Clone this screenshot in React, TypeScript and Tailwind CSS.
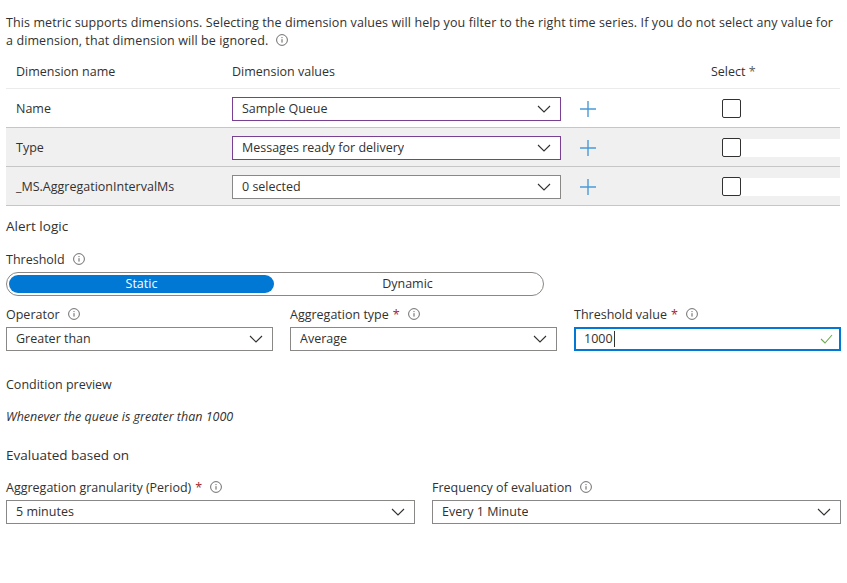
import React from 'react';

function Info() {
  return (
    <svg className="ml-[8px] inline-block h-[12px] w-[12px] align-[-1px]" viewBox="0 0 12 12" fill="none">
      <circle cx="6" cy="6" r="5.4" stroke="#605e5c" strokeWidth="0.9" />
      <line x1="6" y1="5.2" x2="6" y2="8.6" stroke="#605e5c" strokeWidth="1" />
      <circle cx="6" cy="3.6" r="0.6" fill="#605e5c" />
    </svg>
  );
}

function Chevron() {
  return (
    <svg className="h-[8px] w-[14px]" viewBox="0 0 14 8" fill="none">
      <path d="M1 1l6 6 6-6" stroke="#323130" strokeWidth="1.1" />
    </svg>
  );
}

function Plus() {
  return (
    <svg className="h-[18px] w-[18px]" viewBox="0 0 18 18" fill="none">
      <path d="M9 1v16M1 9h16" stroke="#4a9ad8" strokeWidth="1.4" />
    </svg>
  );
}

function Dropdown({ value, className = '', border = 'border-[#8a8886]' }: { value: string; className?: string; border?: string }) {
  return (
    <div className={`flex h-[24px] items-center justify-between border bg-white pl-[9px] pr-[9px] ${border} ${className}`}>
      <span className="truncate">{value}</span>
      <Chevron />
    </div>
  );
}

function Req() {
  return <span className="ml-[4px] text-[#a4262c]">*</span>;
}

const rows = [
  { name: 'Name', value: 'Sample Queue', purple: true, shaded: false },
  { name: 'Type', value: 'Messages ready for delivery', purple: true, shaded: true },
  { name: '_MS.AggregationIntervalMs', value: '0 selected', purple: false, shaded: true },
];

export default function App() {
  return (
    <div className="h-[583px] w-[847px] bg-white px-[6px] text-[12.5px] leading-[18px] text-[#323130] font-['Open_Sans',sans-serif]">
      {/* intro */}
      <p className="w-[832px] pt-[14px] tracking-[0.1px]">
        This metric supports dimensions. Selecting the dimension values will help you filter to the right time series. If you do not select any value for a dimension, that dimension will be ignored.
        <Info />
      </p>

      {/* dimensions table */}
      <div className="w-[834px]">
        <div className="flex h-[39px] items-center border-b border-[#edebe9] pt-[5px]">
          <div className="w-[216px] pl-[10px]">Dimension name</div>
          <div className="w-[489px] pl-[10px]">Dimension values</div>
          <div>
            Select <span className="text-[#605e5c]">*</span>
          </div>
        </div>
        {rows.map((r) => (
          <div
            key={r.name}
            className={`flex h-[39px] items-center border-b border-[#c8c6c4] pt-[1px] ${r.shaded ? 'bg-[#f0f0f0]' : 'bg-white'}`}
          >
            <div className="w-[216px] pl-[10px]">{r.name}</div>
            <div className="w-[339px] pl-[10px]">
              <Dropdown value={r.value} border={r.purple ? 'border-[#7a3e93]' : 'border-[#8a8886]'} />
            </div>
            <div className="ml-[18px]">
              <Plus />
            </div>
            <div className="ml-[125px] h-[19px] w-[19px] rounded-[2px] border border-[#323130] bg-white" />
            {r.shaded && <div className="h-[18px] flex-1 bg-white" />}
          </div>
        ))}
      </div>

      {/* alert logic */}
      <div className="mt-[11px] text-[13.5px]">Alert logic</div>

      <div className="mt-[16px]">
        Threshold
        <Info />
      </div>
      <div className="mt-[3px] flex h-[24px] w-[538px] items-center rounded-full border border-[#8a8886] p-[2px]">
        <div className="flex h-full w-[265px] items-center justify-center rounded-full bg-[#0078d4] text-white">Static</div>
        <div className="flex flex-1 items-center justify-center">Dynamic</div>
      </div>

      <div className="mt-[10px] flex gap-[17px]">
        <div className="w-[267px]">
          <div>
            Operator
            <Info />
          </div>
          <Dropdown value="Greater than" className="mt-[3px]" />
        </div>
        <div className="w-[267px]">
          <div>
            Aggregation type
            <Req />
            <Info />
          </div>
          <Dropdown value="Average" className="mt-[3px]" />
        </div>
        <div className="w-[267px]">
          <div>
            Threshold value
            <Req />
            <Info />
          </div>
          <div className="mt-[3px] flex h-[24px] items-center justify-between border-2 border-[#0078d4] pl-[8px] pr-[6px]">
            <span className="flex items-center">
              1000<span className="ml-[1px] h-[16px] w-px bg-[#323130]" />
            </span>
            <svg className="h-[10px] w-[13px]" viewBox="0 0 13 10" fill="none">
              <path d="M1 5l4 4 7-8" stroke="#6bab4d" strokeWidth="1.1" />
            </svg>
          </div>
        </div>
      </div>

      <div className="mt-[25px]">Condition preview</div>
      <div className="mt-[14px] italic">Whenever the queue is greater than 1000</div>

      <div className="mt-[20px] text-[13.5px]">Evaluated based on</div>

      <div className="mt-[15px] flex gap-[17px]">
        <div className="w-[409px]">
          <div>
            Aggregation granularity (Period)
            <Req />
            <Info />
          </div>
          <Dropdown value="5 minutes" className="mt-[3px]" />
        </div>
        <div className="w-[409px]">
          <div>
            Frequency of evaluation
            <Info />
          </div>
          <Dropdown value="Every 1 Minute" className="mt-[3px]" />
        </div>
      </div>
    </div>
  );
}
